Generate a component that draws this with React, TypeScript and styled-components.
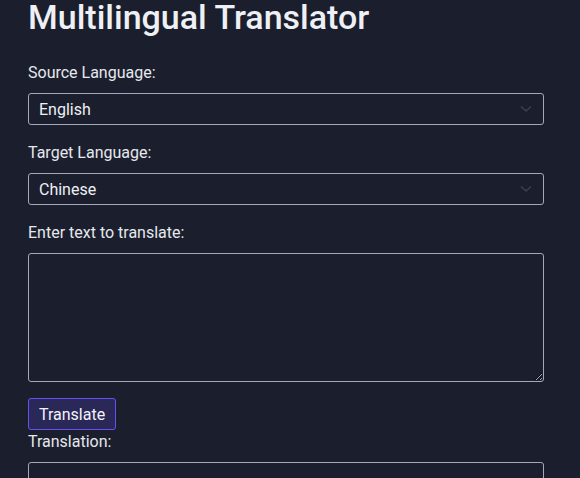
import React, { useState } from "react";
import styled, { createGlobalStyle } from "styled-components";

const GlobalStyle = createGlobalStyle`
  html, body {
    margin: 0;
    padding: 0;
    background: #1b1f2d;
  }
  body {
    font-family: Roboto, "Noto Sans", sans-serif;
    color: #e8eaf0;
  }
  * { box-sizing: border-box; }
`;

const Page = styled.div`
  width: 580px;
  height: 478px;
  overflow: hidden;
  background: #1b1f2d;
  padding: 0 36px 0 28px;
`;

const Title = styled.h1`
  margin: 0 0 27px 0;
  font-size: 34px;
  line-height: 34px;
  font-weight: 500;
  color: #eef0f5;
`;

const Label = styled.label`
  display: block;
  font-size: 16px;
  line-height: 24px;
  color: #e6e8ee;
  margin-bottom: 8px;
`;

const Field = styled.div<{ $gap?: number }>`
  margin-bottom: ${(p) => (p.$gap ?? 16)}px;
`;

const SelectWrap = styled.div`
  position: relative;
  width: 516px;
`;

const Select = styled.select`
  appearance: none;
  width: 100%;
  height: 32px;
  padding: 0 30px 0 10px;
  background: #1b1f2d;
  color: #eef0f5;
  border: 1px solid #a3a8bd;
  border-radius: 3px;
  font-family: inherit;
  font-size: 16px;
  outline: none;
`;

const Chevron = styled.svg`
  position: absolute;
  right: 12px;
  top: 50%;
  width: 12px;
  height: 8px;
  transform: translateY(-50%);
  pointer-events: none;
`;

const TextArea = styled.textarea<{ $h: number }>`
  display: block;
  width: 516px;
  height: ${(p) => p.$h}px;
  background: #1b1f2d;
  color: #eef0f5;
  border: 1px solid #a3a8bd;
  border-radius: 3px;
  font-family: inherit;
  font-size: 16px;
  padding: 8px 10px;
  outline: none;
  resize: vertical;
`;

const Button = styled.button`
  display: block;
  height: 32px;
  padding: 0 10px;
  background: #2a2856;
  color: #f2f2fa;
  border: 1px solid #6a4ff0;
  border-radius: 3px;
  font-family: inherit;
  font-size: 16px;
  cursor: pointer;
`;

const languages = ["English", "Chinese", "Spanish", "French", "German", "Japanese"];

const LangSelect: React.FC<{ value: string; onChange: (v: string) => void }> = ({ value, onChange }) => (
  <SelectWrap>
    <Select value={value} onChange={(e) => onChange(e.target.value)}>
      {languages.map((l) => (
        <option key={l} value={l}>
          {l}
        </option>
      ))}
    </Select>
    <Chevron viewBox="0 0 12 8">
      <path d="M1 1.5 L6 6 L11 1.5" fill="none" stroke="#3a3f52" strokeWidth="1.6" />
    </Chevron>
  </SelectWrap>
);

export default function App() {
  const [src, setSrc] = useState("English");
  const [tgt, setTgt] = useState("Chinese");
  const [text, setText] = useState("");
  return (
    <>
      <GlobalStyle />
      <Page>
        <Title>Multilingual Translator</Title>
        <Field>
          <Label>Source Language:</Label>
          <LangSelect value={src} onChange={setSrc} />
        </Field>
        <Field>
          <Label>Target Language:</Label>
          <LangSelect value={tgt} onChange={setTgt} />
        </Field>
        <Field>
          <Label>Enter text to translate:</Label>
          <TextArea $h={129} value={text} onChange={(e) => setText(e.target.value)} />
        </Field>
        <Field $gap={0}>
          <Button>Translate</Button>
        </Field>
        <Field>
          <Label>Translation:</Label>
          <TextArea $h={129} readOnly />
        </Field>
      </Page>
    </>
  );
}
